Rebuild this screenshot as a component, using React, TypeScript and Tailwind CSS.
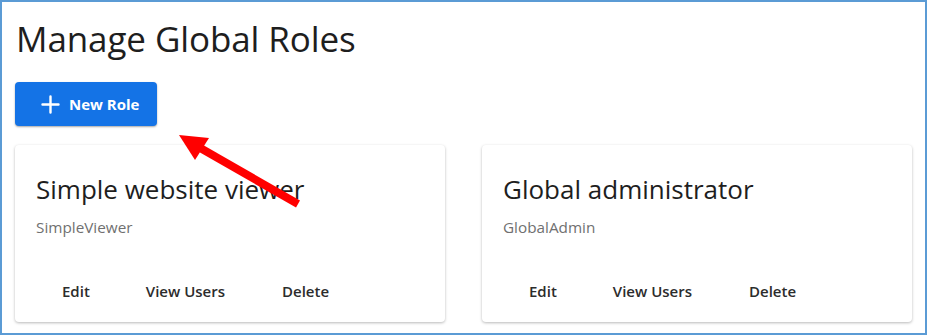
import React from "react";

function RoleCard({ title, id }: { title: string; id: string }) {
  return (
    <div className="h-[177px] bg-white rounded-[4px] shadow-[0_1px_3px_rgba(0,0,0,0.28)] pl-[21px] pt-[27px] flex flex-col">
      <div className="text-[26px] leading-[34px] text-[#1e1e1e]">{title}</div>
      <div className="mt-[11px] text-[15.3px] leading-[20px] text-[#707070]">{id}</div>
      <div className="mt-auto mb-[15px] flex items-center">
        <button className="pl-[26px] pr-[28px] h-[32px] text-[15px] font-semibold text-[#2c2c2c]">Edit</button>
        <button className="px-[28px] h-[32px] text-[15px] font-semibold text-[#2c2c2c]">View Users</button>
        <button className="px-[29px] h-[32px] text-[15px] font-semibold text-[#2c2c2c]">Delete</button>
      </div>
    </div>
  );
}

export default function App() {
  return (
    <div
      className="relative w-[929px] h-[335px] bg-white overflow-hidden"
      style={{ fontFamily: '"Open Sans", "Noto Sans", sans-serif' }}
    >
      <div className="w-[927px] h-[335px] border-2 border-[#5b9bd5] pt-[16px] pl-[13px] pr-[13px] flex flex-col">
        <h1 className="text-[35px] leading-[42px] text-[#1e1e1e] pl-[1px] tracking-[-0.1px]">Manage Global Roles</h1>
        <div className="mt-[22px]">
          <button className="w-[142px] h-[44px] rounded-[4px] bg-[#1473e6] shadow-[0_1px_2px_rgba(0,0,0,0.35)] flex items-center pl-[26px] gap-[9px] text-white text-[15px] font-bold">
            <svg width="19" height="19" viewBox="0 0 19 19" fill="none">
              <path d="M9.5 1.5v16M1.5 9.5h16" stroke="white" strokeWidth="2.4" strokeLinecap="round" />
            </svg>
            <span>New Role</span>
          </button>
        </div>
        <div className="mt-[19px] grid grid-cols-2 gap-[37px]">
          <RoleCard title="Simple website viewer" id="SimpleViewer" />
          <RoleCard title="Global administrator" id="GlobalAdmin" />
        </div>
      </div>
      <svg className="absolute left-0 top-0 pointer-events-none" width="929" height="335">
        <line x1="298" y1="204" x2="195" y2="145" stroke="#ff0000" strokeWidth="8" />
        <polygon points="179,135 209,138 195,160" fill="#ff0000" />
      </svg>
    </div>
  );
}
